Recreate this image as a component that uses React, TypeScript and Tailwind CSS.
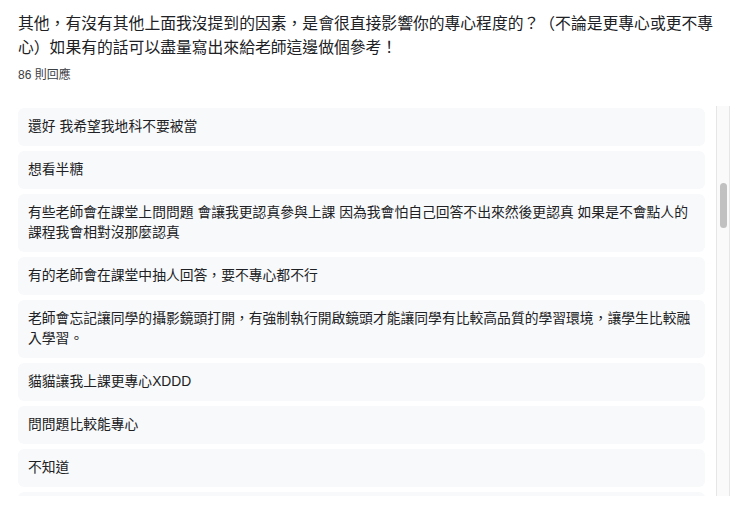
const replies: string[] = [
    '還好 我希望我地科不要被當',
    '想看半糖',
    '有些老師會在課堂上問問題 會讓我更認真參與上課 因為我會怕自己回答不出來然後更認真 如果是不會點人的課程我會相對沒那麼認真',
    '有的老師會在課堂中抽人回答，要不專心都不行',
    '老師會忘記讓同學的攝影鏡頭打開，有強制執行開啟鏡頭才能讓同學有比較高品質的學習環境，讓學生比較融入學習。',
    '貓貓讓我上課更專心XDDD',
    '問問題比較能專心',
    '不知道',
    '\u00a0',
];

const ReplyItem = ({ text }: { text: string }) => (
    <div className="shrink-0 rounded-md bg-[#f8f9fa] pl-[10px] pr-[8px] py-[9px] text-[13.8px] leading-5 text-[#202124]">
        {text}
    </div>
);

export default function App() {
    return (
        <div className="h-[516px] w-[740px] overflow-hidden bg-white pl-[18px] pr-[10px] pt-3 font-['Liberation_Sans','Noto_Sans_CJK_TC',sans-serif]">
            <h1 className="w-[700px] text-[15.8px] leading-6 text-[#202124]">
                其他，有沒有其他上面我沒提到的因素，是會很直接影響你的專心程度的？（不論是更專心或更不專心）如果有的話可以盡量寫出來給老師這邊做個參考！
            </h1>
            <div className="mt-[6px] text-[12px] leading-[18px] text-[#3c4043]">86 則回應</div>
            <div className="mt-[22px] flex h-[390px] overflow-hidden">
                <div className="flex w-[687px] flex-col gap-[5px] pt-[2px]">
                    {replies.map((r, i) => (
                        <ReplyItem key={i} text={r} />
                    ))}
                </div>
                <div className="ml-[11px] w-[14px] border-x border-[#e6e6e6] bg-[#fafafa] pt-[77px]">
                    <div className="mx-auto h-[45px] w-[7px] rounded-full bg-[#c1c1c1]" />
                </div>
            </div>
        </div>
    );
}
